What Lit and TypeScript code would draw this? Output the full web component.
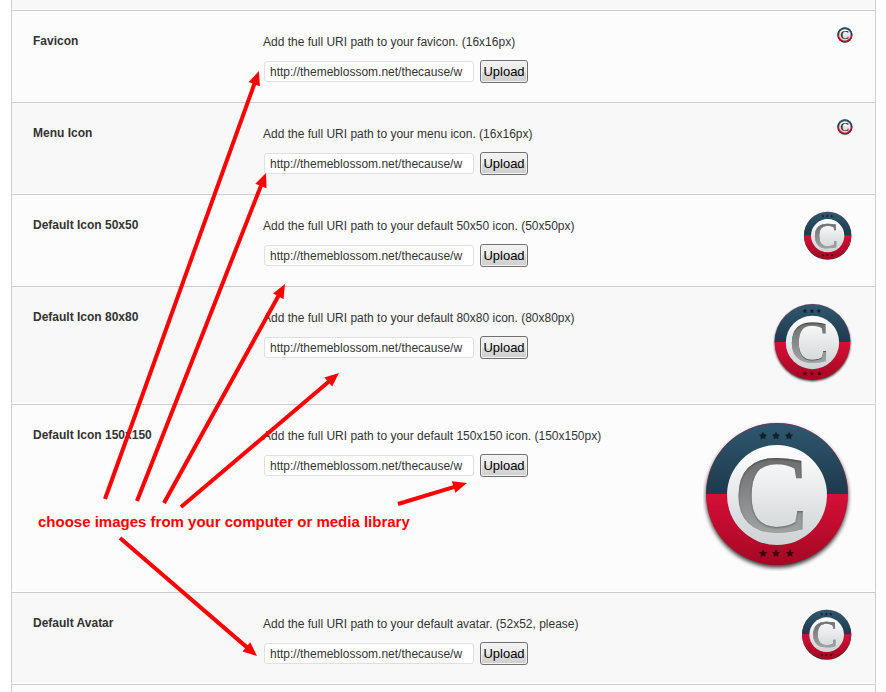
import { LitElement, html, svg, css } from "lit";
import { customElement, property } from "lit/decorators.js";

interface Field {
  id: string;
  label: string;
  hint: string;
  size: number;
}

const FIELDS: Field[] = [
  { id: "favicon", label: "Favicon", hint: "Add the full URI path to your favicon. (16x16px)", size: 16 },
  { id: "menu-icon", label: "Menu Icon", hint: "Add the full URI path to your menu icon. (16x16px)", size: 16 },
  { id: "icon-50", label: "Default Icon 50x50", hint: "Add the full URI path to your default 50x50 icon. (50x50px)", size: 50 },
  { id: "icon-80", label: "Default Icon 80x80", hint: "Add the full URI path to your default 80x80 icon. (80x80px)", size: 80 },
  { id: "icon-150", label: "Default Icon 150x150", hint: "Add the full URI path to your default 150x150 icon. (150x150px)", size: 150 },
  { id: "avatar", label: "Default Avatar", hint: "Add the full URI path to your default avatar. (52x52, please)", size: 52 },
];

const URI = "http://themeblossom.net/thecause/w";

type Line = [number, number, number, number];

const ARROWS: Line[] = [
  [105, 499, 259, 71],
  [137, 501, 266, 173],
  [164, 503, 285, 284],
  [181, 507, 339, 373],
  [398, 504, 467, 483],
  [120, 538, 257, 656],
];

function arrow([x1, y1, x2, y2]: Line) {
  const len = Math.hypot(x2 - x1, y2 - y1);
  const ux = (x2 - x1) / len;
  const uy = (y2 - y1) / len;
  const at = (along: number, side: number) =>
    `${(x1 + ux * along - uy * side).toFixed(1)},${(y1 + uy * along + ux * side).toFixed(1)}`;
  const base = len - 14;
  const points = [at(0, 2), at(base, 2), at(base, 6), at(len, 0), at(base, -6), at(base, -2), at(0, -2)];
  return svg`<polygon points=${points.join(" ")} fill="#fe0000"></polygon>`;
}

function star(cx: number, cy: number, r: number) {
  const pts: string[] = [];
  for (let i = 0; i < 10; i++) {
    const a = (Math.PI / 5) * i - Math.PI / 2;
    const d = i % 2 ? r * 0.48 : r;
    pts.push(`${(cx + d * Math.cos(a)).toFixed(2)},${(cy + d * Math.sin(a)).toFixed(2)}`);
  }
  return svg`<polygon points=${pts.join(" ")}></polygon>`;
}

@customElement("cause-badge")
export class CauseBadge extends LitElement {
  @property({ type: Number }) size = 50;

  static styles = css`
    :host { display: block; line-height: 0; }
    .letter { font-family: "Liberation Serif", serif; font-size: 109px; }
    .letter.tiny { font-size: 118px; }
  `;

  render() {
    const tiny = this.size < 30;
    return html`
      <svg width=${this.size} height=${this.size} viewBox="0 0 150 150" role="img" aria-label="Icon preview">
        <defs>
          <linearGradient id="blue" x1="0" y1="0" x2="0" y2="1">
            <stop offset="0" stop-color="#2f5870"></stop>
            <stop offset="1" stop-color="#1e3a4b"></stop>
          </linearGradient>
          <linearGradient id="red" x1="0" y1="0" x2="0" y2="1">
            <stop offset="0" stop-color="#d50f37"></stop>
            <stop offset="1" stop-color="#a50823"></stop>
          </linearGradient>
          <linearGradient id="disc" x1="0" y1="0" x2="0" y2="1">
            <stop offset="0" stop-color="#ffffff"></stop>
            <stop offset="1" stop-color="#cdd2d4"></stop>
          </linearGradient>
          <linearGradient id="ink" gradientUnits="userSpaceOnUse" x1="0" y1="36" x2="0" y2="112">
            <stop offset="0" stop-color=${tiny ? "#111" : "#6c6d6d"}></stop>
            <stop offset="1" stop-color=${tiny ? "#222" : "#a0a3a4"}></stop>
          </linearGradient>
          <filter id="soft" x="-10%" y="-10%" width="120%" height="120%">
            <feGaussianBlur stdDeviation="2"></feGaussianBlur>
          </filter>
          <filter id="inset" x="-10%" y="-10%" width="120%" height="120%">
            <feComponentTransfer in="SourceAlpha" result="inv">
              <feFuncA type="table" tableValues="1 0"></feFuncA>
            </feComponentTransfer>
            <feGaussianBlur in="inv" stdDeviation="1.2" result="b"></feGaussianBlur>
            <feOffset in="b" dx="0" dy="1" result="o"></feOffset>
            <feComposite in="o" in2="SourceAlpha" operator="in" result="shade"></feComposite>
            <feComponentTransfer in="shade" result="s">
              <feFuncA type="linear" slope="0.7"></feFuncA>
            </feComponentTransfer>
            <feMerge>
              <feMergeNode in="SourceGraphic"></feMergeNode>
              <feMergeNode in="s"></feMergeNode>
            </feMerge>
          </filter>
        </defs>
        <circle cx="74" cy="75.5" r="71" fill="#000" opacity="0.8" filter="url(#soft)"></circle>
        <path d="M3 73a71 71 0 0 1 142 0z" fill="url(#blue)"></path>
        <path d="M3 73a71 71 0 0 0 142 0z" fill="url(#red)"></path>
        <path d="M3.4 73a70.6 70.6 0 0 1 141.2 0" fill="none" stroke="#a3163a" stroke-opacity="0.6" stroke-width="0.8"></path>
        <circle cx="74" cy="74" r=${tiny ? 54 : 50} fill="url(#disc)"></circle>
        ${tiny
          ? null
          : svg`
            <g fill="#10202b">${star(60, 15, 4.4)}${star(73, 15, 4.4)}${star(86, 15, 4.4)}</g>
            <g fill="#3f0610">${star(60, 132.5, 4.4)}${star(73, 132.5, 4.4)}${star(87, 132.5, 4.4)}</g>`}
        <text class="letter ${tiny ? "tiny" : ""}" x=${tiny ? 32 : 32} y=${tiny ? 114 : 110}
          fill="url(#ink)" stroke="url(#ink)" stroke-width="2"
          filter=${tiny ? "none" : "url(#inset)"}>C</text>
      </svg>
    `;
  }
}

@customElement("app-root")
export class AppRoot extends LitElement {
  static styles = css`
    :host {
      display: block;
      height: 100vh;
      overflow: hidden;
      background: #fff;
      color: #333;
      font: 12px/20px "Liberation Sans", Arial, sans-serif;
    }
    .page {
      position: relative;
      display: flex;
      flex-direction: column;
      min-height: 100%;
    }
    .panel {
      flex: 1;
      display: flex;
      flex-direction: column;
      margin: 0 10px 0 11px;
    }
    .row {
      display: grid;
      grid-template-columns: 230px 1fr auto;
      align-items: start;
      border: 1px solid #ccc;
      border-bottom-color: #fff;
      padding: 0 22px 0 21px;
      background: #fcfcfc;
    }
    .row:nth-child(odd) { background: #f8f8f8; }
    .row.previous { height: 9px; border-top: 0; }
    .row.next { flex: 1; border-bottom: 0; background: #fcfcfc; }
    .name { padding-top: 20px; font-weight: bold; }
    .body { padding: 21px 0 18px; }
    .hint { margin: 0; }
    .controls {
      display: flex;
      align-items: center;
      gap: 6px;
      margin-top: 8px;
      padding-left: 1px;
    }
    .uri {
      box-sizing: border-box;
      width: 210px;
      height: 21px;
      padding: 0 5px;
      border: 1px solid #dfdfdf;
      border-radius: 3px;
      background: #fff;
      color: #333;
      font: 12px/18px "Liberation Sans", Arial, sans-serif;
    }
    .upload {
      box-sizing: border-box;
      width: 48px;
      height: 23px;
      padding: 0;
      border: 1px solid #707070;
      border-radius: 3px;
      background: linear-gradient(#f2f2f2 0%, #ebebeb 50%, #dddddd 50%, #cfcfcf 100%);
      box-shadow: inset 0 0 0 1px #f3f3f3;
      color: #000;
      font: 13px/20px "Liberation Sans", Arial, sans-serif;
      white-space: nowrap;
    }
    .preview { padding: 16px 0 20px; }
    .preview.short { padding-bottom: 0; }
    .arrows {
      position: absolute;
      left: 0;
      top: 0;
      pointer-events: none;
    }
    .note {
      position: absolute;
      left: 38px;
      top: 512px;
      margin: 0;
      color: #fe0000;
      font-size: 15px;
      font-weight: bold;
      white-space: nowrap;
    }
  `;

  private row(f: Field) {
    return html`
      <div class="row">
        <label class="name" for=${f.id}>${f.label}</label>
        <div class="body">
          <p class="hint" id="${f.id}-hint">${f.hint}</p>
          <div class="controls">
            <input class="uri" id=${f.id} type="text" .value=${URI} aria-describedby="${f.id}-hint" />
            <button class="upload" type="button">Upload</button>
          </div>
        </div>
        <div class="preview ${f.size < 60 ? "short" : ""}">
          <cause-badge .size=${f.size}></cause-badge>
        </div>
      </div>
    `;
  }

  render() {
    return html`
      <main class="page">
        <div class="panel">
          <div class="row previous"></div>
          ${FIELDS.map((f) => this.row(f))}
          <div class="row next"></div>
        </div>
        <svg class="arrows" width="480" height="670" aria-hidden="true">${ARROWS.map(arrow)}</svg>
        <p class="note">choose images from your computer or media library</p>
      </main>
    `;
  }
}
